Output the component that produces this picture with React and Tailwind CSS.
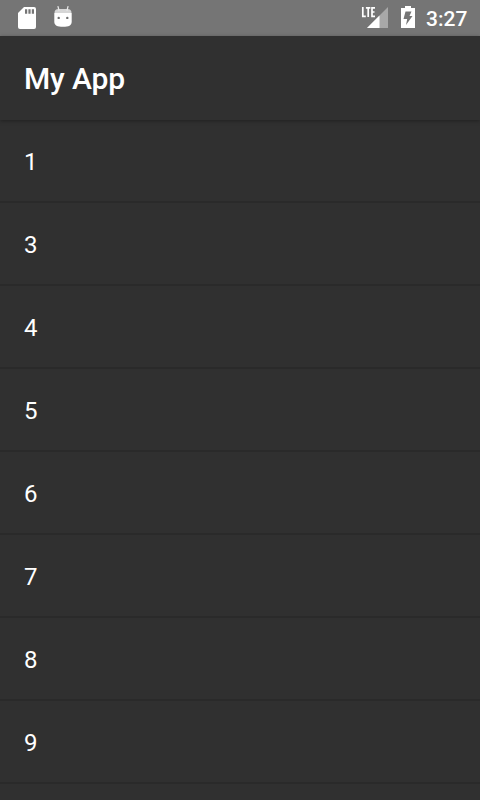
const rows = [1, 3, 4, 5, 6, 7, 8, 9];

function StatusBar() {
  return (
    <div className="flex h-9 w-full shrink-0 items-start bg-[#757575] text-white">
      <svg className="h-9 w-[90px]" viewBox="0 0 90 36" fill="none">
        <path fill="#fff" d="M24 7h10a2 2 0 0 1 2 2v18a2 2 0 0 1-2 2H20a2 2 0 0 1-2-2V13z" />
        <path fill="#757575" d="M25 9.300h2.200v4.500H25zM28.400 9.300h2.200v4.500h-2.200zM31.800 9.300H34v4.500h-2.200z" />
        <path fill="#d6d6d6" d="M58.500 9h9q4 0 4 4h-17q0-4 4-4z" />
        <path fill="#fff" d="M54.300 13h17.400v8.500c0 4-3 5.300-8.700 5.300s-8.700-1.300-8.700-5.300z" />
        <path fill="#707070" d="M57.500 17.900a1.200 1.200 0 1 0 2.400 0a1.200 1.200 0 1 0-2.400 0M66.100 17.900a1.200 1.200 0 1 0 2.400 0a1.200 1.200 0 1 0-2.400 0" />
        <path stroke="#e8e8e8" strokeWidth="1.200" strokeLinecap="round" d="M58 6.500l1 4M68 6.500l-1 4" />
      </svg>
      <div className="flex-1" />
      <svg className="h-9 w-[68px]" viewBox="358 0 68 36" fill="none">
        <path fill="#a8a8a8" d="M388 7v21h-21z" />
        <path fill="#fff" d="M379.500 15.500V28H367z" />
        <path stroke="#fff" strokeWidth="1.700" d="M362.800 7v9.300h3M365.900 7.800h4.500M368.200 7.800V17M375 7.800h-3v8.500h3M372 12h2.500" />
        <path fill="#fff" d="M405 6h6v2h4v20h-14V8h4z" />
        <path fill="#757575" d="M405.500 11.500h6l-2 4.500h3l-6.500 9 1.200-6H403.500z" />
      </svg>
      <span className="w-[54px] text-[21px] leading-[38px] font-medium">3:27</span>
    </div>
  );
}

export default function App() {
  return (
    <div className="flex h-[800px] w-[480px] flex-col overflow-hidden bg-[#303030] font-['Roboto',sans-serif] text-white">
      <StatusBar />
      <header className="z-10 flex h-[84px] shrink-0 items-center bg-[#303030] px-6 text-[30px] font-medium tracking-[-0.15px] shadow-[0_1px_4px_rgba(0,0,0,0.35)]">
        My App
      </header>
      <ul>
        {rows.map((n) => (
          <li key={n} className="flex h-[83px] items-center border-b-2 border-[#2a2a2a] px-6 pt-0.5 text-2xl">{n}</li>
        ))}
      </ul>
    </div>
  );
}
